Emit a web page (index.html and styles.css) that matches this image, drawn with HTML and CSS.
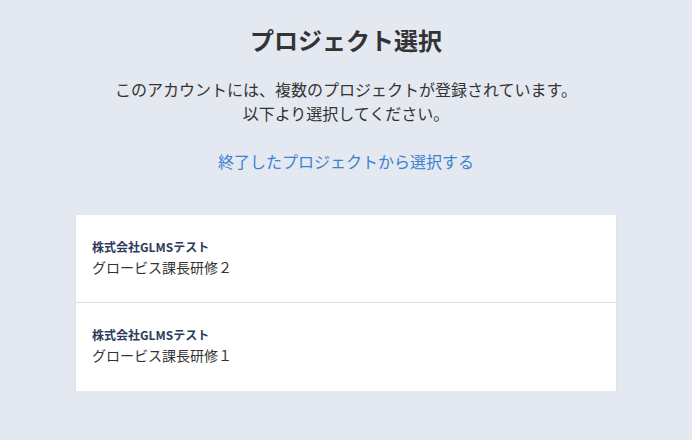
FILE: index.html
```html
<!DOCTYPE html>
<html>

<head>
    <title>プロジェクト選択</title>
    <link rel="stylesheet" href="styles.css">
</head>

<body>
    <div class="page">
        <h1 class="page-title">プロジェクト選択</h1>
        <p class="lead">このアカウントには、複数のプロジェクトが登録されています。<br>以下より選択してください。</p>
        <a class="archive-link" href="#">終了したプロジェクトから選択する</a>

        <ul class="project-list">
            <li class="project-item">
                <div class="company">株式会社GLMSテスト</div>
                <div class="project-name">グロービス課長研修２</div>
            </li>
            <li class="project-item">
                <div class="company">株式会社GLMSテスト</div>
                <div class="project-name">グロービス課長研修１</div>
            </li>
        </ul>
    </div>
</body>

</html>
```

FILE: styles.css
```css
body {
    margin: 0;
    background-color: #e4e8f1;
    color: #333;
    font-family: "Noto Sans CJK JP", "Noto Sans", sans-serif;
}

.page {
    display: flex;
    flex-direction: column;
    align-items: center;
    padding-top: 24px;
}

.page-title {
    margin: 0;
    font-size: 24px;
    line-height: 32px;
    font-weight: bold;
    color: #333;
}

.lead {
    margin: 21px 0 0;
    font-size: 16px;
    line-height: 24px;
    text-align: center;
}

.archive-link {
    margin-top: 24px;
    font-size: 16px;
    line-height: 24px;
    color: #3a82d0;
    text-decoration: none;
}

.project-list {
    list-style: none;
    margin: 42px 0 0;
    padding: 0;
    width: 540px;
    background-color: #fff;
    box-shadow: 0 1px 2px rgba(0, 0, 0, 0.08);
}

.project-item {
    height: 88px;
    box-sizing: border-box;
    padding: 23px 16px 0;
    border-bottom: 1px solid #dcdee3;
}

.project-item:last-child {
    border-bottom: none;
}

.company {
    font-size: 12px;
    line-height: 18px;
    font-weight: bold;
    color: #2c3b5c;
}

.project-name {
    font-size: 14px;
    line-height: 22px;
    color: #333;
}
```
